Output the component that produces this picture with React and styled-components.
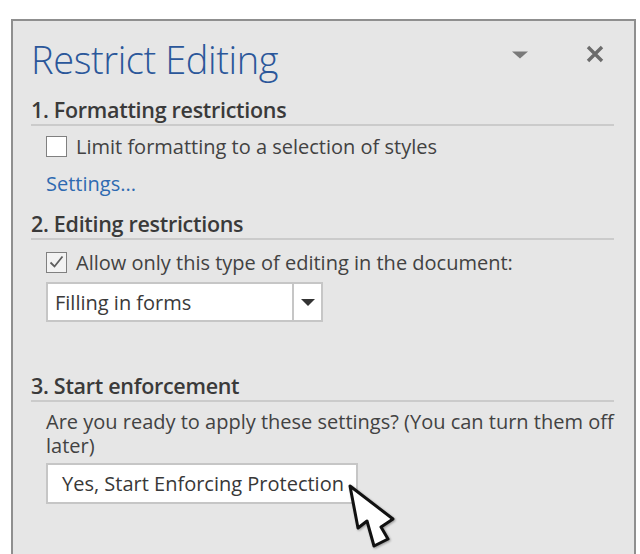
import React from "react";
import styled, { createGlobalStyle } from "styled-components";

const Global = createGlobalStyle`
  html, body { margin: 0; padding: 0; background: #ffffff; overflow: hidden; }
  body { font-family: "Open Sans", "Noto Sans", sans-serif; }
`;

const Page = styled.div`
  width: 640px;
  height: 554px;
  padding: 19px 4px 0 11px;
  box-sizing: border-box;
  overflow: hidden;
`;

const Panel = styled.div`
  position: relative;
  width: 625px;
  height: 560px;
  box-sizing: border-box;
  background: #e6e6e6;
  border: 2px solid #8f8f8f;
  border-bottom: none;
  padding: 0 20px 0 18px;
`;

const TitleBar = styled.div`
  display: flex;
  align-items: center;
  height: 75px;
`;

const Title = styled.h1`
  flex: 1;
  margin: 0;
  font-weight: 300;
  font-size: 38px;
  color: #2b579a;
  letter-spacing: -0.4px;
`;

const IconBtn = styled.div`
  align-self: flex-start;
  display: flex;
  align-items: center;
  justify-content: center;
  width: ${(p) => p.w}px;
  height: ${(p) => p.h}px;
  margin-top: ${(p) => p.top}px;
  margin-right: ${(p) => p.right || 0}px;
`;

const Section = styled.section`
  display: flex;
  flex-direction: column;
  margin-top: ${(p) => p.gap || 0}px;
`;

const SectionHead = styled.h2`
  margin: 0;
  font-size: 21.5px;
  font-weight: 600;
  color: #3a3a3a;
  line-height: 28px;
  border-bottom: 2px solid #cbcbcb;
  letter-spacing: -0.3px;
`;

const Body = styled.div`
  display: flex;
  flex-direction: column;
  padding-left: 15px;
  padding-top: ${(p) => p.top || 0}px;
`;

const CheckRow = styled.label`
  display: flex;
  align-items: center;
  gap: 9px;
  font-size: 20px;
  color: #424242;
  height: 28px;
`;

const Box = styled.span`
  width: 19px;
  height: 19px;
  border: 1.5px solid #808080;
  background: ${(p) => (p.checked ? "#f3f3f3" : "#ffffff")};
  display: flex;
  align-items: center;
  justify-content: center;
  flex-shrink: 0;
`;

const Link = styled.a`
  font-size: 20px;
  color: #2e6ab1;
  margin-top: 12px;
  line-height: 24px;
`;

const Select = styled.div`
  display: flex;
  width: 277px;
  height: 40px;
  box-sizing: border-box;
  border: 2px solid #c6c6c6;
  background: #ffffff;
  margin-top: 6px;
`;

const SelectText = styled.div`
  flex: 1;
  display: flex;
  align-items: center;
  padding-left: 7px;
  font-size: 20px;
  color: #3a3a3a;
  border-right: 2px solid #c6c6c6;
`;

const SelectArrow = styled.div`
  width: 27px;
  display: flex;
  align-items: center;
  justify-content: center;
`;

const Para = styled.p`
  margin: 0;
  font-size: 20px;
  line-height: 24px;
  color: #424242;
`;

const Button = styled.div`
  position: relative;
  width: 312px;
  height: 41px;
  box-sizing: border-box;
  border: 2px solid #c6c6c6;
  background: #ffffff;
  display: flex;
  align-items: center;
  padding-left: 14px;
  font-size: 20px;
  color: #383838;
  margin-top: 5px;
`;

const Cursor = styled.svg`
  position: absolute;
  left: 301px;
  top: 20px;
  overflow: visible;
  filter: drop-shadow(1px 1px 1px rgba(0, 0, 0, 0.35));
`;

export default function App() {
  return (
    <>
      <Global />
      <Page>
        <Panel>
          <TitleBar>
            <Title>Restrict Editing</Title>
            <IconBtn w={16} h={8} top={30}>
              <svg width="16" height="8" viewBox="0 0 16 8">
                <path d="M0 0.5 L16 0.5 L8 7.5 Z" fill="#7a7a7a" />
              </svg>
            </IconBtn>
            <IconBtn w={18} h={18} top={24} right={10} style={{ marginLeft: 58 }}>
              <svg width="18" height="18" viewBox="0 0 18 18">
                <path d="M2 2 L16 16 M16 2 L2 16" stroke="#6c6c6c" strokeWidth="3.4" />
              </svg>
            </IconBtn>
          </TitleBar>

          <Section>
            <SectionHead>1. Formatting restrictions</SectionHead>
            <Body top={6}>
              <CheckRow>
                <Box />
                Limit formatting to a selection of styles
              </CheckRow>
              <Link>Settings...</Link>
            </Body>
          </Section>

          <Section gap={14}>
            <SectionHead>2. Editing restrictions</SectionHead>
            <Body top={8}>
              <CheckRow>
                <Box checked>
                  <svg width="15" height="14" viewBox="0 0 15 14">
                    <path d="M1.5 7.5 L5.5 11.5 L13.5 1.5" stroke="#5f5f5f" strokeWidth="1.8" fill="none" />
                  </svg>
                </Box>
                Allow only this type of editing in the document:
              </CheckRow>
              <Select>
                <SelectText>Filling in forms</SelectText>
                <SelectArrow>
                  <svg width="14" height="7" viewBox="0 0 14 7">
                    <path d="M0 0 L14 0 L7 7 Z" fill="#333333" />
                  </svg>
                </SelectArrow>
              </Select>
            </Body>
          </Section>

          <Section gap={50}>
            <SectionHead>3. Start enforcement</SectionHead>
            <Body top={8}>
              <Para>
                Are you ready to apply these settings? (You can turn them off later)
              </Para>
              <Button>
                Yes, Start Enforcing Protection
                <Cursor width="48" height="64" viewBox="0 0 48 64">
                  <path
                    d="M1 1 L9 43 L18 36 L25 61 L39 54 L32 42 L44 34 Z"
                    fill="#ffffff"
                    stroke="#111111"
                    strokeWidth="3"
                    strokeLinejoin="round"
                  />
                </Cursor>
              </Button>
            </Body>
          </Section>
        </Panel>
      </Page>
    </>
  );
}
